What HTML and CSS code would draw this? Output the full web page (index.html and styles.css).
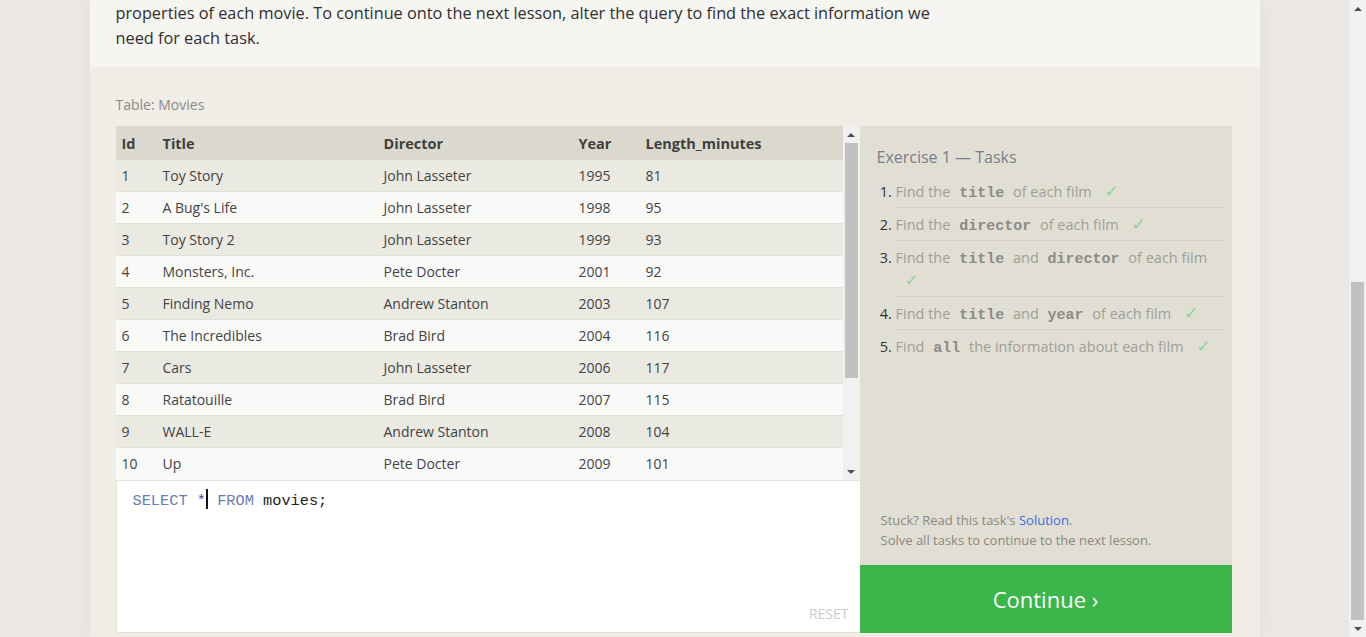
FILE: index.html
```html
<!DOCTYPE html>
<html lang="en">
<head>
<meta charset="utf-8">
<title>SQL Lesson 1: SELECT queries 101</title>
<link rel="stylesheet" href="styles.css">
</head>
<body>
<div class="viewport">
  <main class="card">
    <div class="lesson">
      <p class="last">properties of each movie. To continue onto the next lesson, alter the query to find the exact information we need for each task.</p>
    </div>

    <section class="exercise">
      <div class="table-label">Table: Movies</div>
      <div class="workspace">
        <div class="left">
          <div class="table-area">
            <div class="table-wrap">
              <table class="movies">
                <colgroup>
                  <col class="c-id"><col class="c-title"><col class="c-dir"><col class="c-year"><col class="c-len">
                </colgroup>
                <thead>
                  <tr><th>Id</th><th>Title</th><th>Director</th><th>Year</th><th>Length_minutes</th></tr>
                </thead>
                <tbody>
                  <tr><td>1</td><td>Toy Story</td><td>John Lasseter</td><td>1995</td><td>81</td></tr>
                  <tr><td>2</td><td>A Bug's Life</td><td>John Lasseter</td><td>1998</td><td>95</td></tr>
                  <tr><td>3</td><td>Toy Story 2</td><td>John Lasseter</td><td>1999</td><td>93</td></tr>
                  <tr><td>4</td><td>Monsters, Inc.</td><td>Pete Docter</td><td>2001</td><td>92</td></tr>
                  <tr><td>5</td><td>Finding Nemo</td><td>Andrew Stanton</td><td>2003</td><td>107</td></tr>
                  <tr><td>6</td><td>The Incredibles</td><td>Brad Bird</td><td>2004</td><td>116</td></tr>
                  <tr><td>7</td><td>Cars</td><td>John Lasseter</td><td>2006</td><td>117</td></tr>
                  <tr><td>8</td><td>Ratatouille</td><td>Brad Bird</td><td>2007</td><td>115</td></tr>
                  <tr><td>9</td><td>WALL-E</td><td>Andrew Stanton</td><td>2008</td><td>104</td></tr>
                  <tr><td>10</td><td>Up</td><td>Pete Docter</td><td>2009</td><td>101</td></tr>
                </tbody>
              </table>
            </div>
            <div class="vscroll">
              <div class="sb-btn"><span class="tri-up"></span></div>
              <div class="sb-track sb-track-table"><div class="sb-thumb thumb-table"></div></div>
              <div class="sb-btn"><span class="tri-down"></span></div>
            </div>
          </div>
          <div class="editor">
            <div class="code"><span class="kw">SELECT</span> <span class="op">*</span><span class="caret"></span> <span class="kw">FROM</span> <span class="id">movies;</span></div>
            <div class="reset">RESET</div>
          </div>
        </div>
        <div class="right">
          <div class="tasks">
            <h3 class="tasks-title">Exercise 1 — Tasks</h3>
            <ol class="task-list">
              <li>Find the <code>title</code> of each film <span class="check">✓</span></li>
              <li>Find the <code>director</code> of each film <span class="check">✓</span></li>
              <li>Find the <code>title</code> and <code>director</code> of each film <span class="check">✓</span></li>
              <li>Find the <code>title</code> and <code>year</code> of each film <span class="check">✓</span></li>
              <li>Find <code>all</code> the information about each film <span class="check">✓</span></li>
            </ol>
          </div>
          <div class="stuck">
            <div>Stuck? Read this task's <a class="link" href="#">Solution</a>.</div>
            <div>Solve all tasks to continue to the next lesson.</div>
          </div>
          <div class="continue">Continue ›</div>
        </div>
      </div>
    </section>
  </main>
</div>
<div class="vscroll page-scroll">
  <div class="sb-btn"><span class="tri-up"></span></div>
  <div class="sb-track sb-track-page"><div class="sb-thumb thumb-page"></div></div>
  <div class="sb-btn"><span class="tri-down"></span></div>
</div>
</body>
</html>
```

FILE: styles.css
```css
html {
  background: #ebe7e4;
}

body {
  margin: 0;
  height: 637px;
  overflow: hidden;
  display: flex;
  font-family: "Open Sans", "Noto Sans", sans-serif;
  color: #333;
}

.viewport {
  flex: 1;
  display: flex;
  justify-content: center;
  align-items: flex-start;
  overflow: hidden;
  background: #ebe7e4;
}

/* fake scrollbars */
.vscroll {
  width: 17px;
  flex: none;
  display: flex;
  flex-direction: column;
  background: #f1f1f1;
}

.sb-btn {
  height: 17px;
  flex: none;
  display: flex;
  align-items: center;
  justify-content: center;
}

.tri-up {
  width: 0;
  height: 0;
  border-left: 4px solid transparent;
  border-right: 4px solid transparent;
  border-bottom: 4px solid #505050;
}

.tri-down {
  width: 0;
  height: 0;
  border-left: 4px solid transparent;
  border-right: 4px solid transparent;
  border-top: 4px solid #505050;
}

.sb-track {
  flex: 1;
  display: flex;
  flex-direction: column;
}

.sb-thumb {
  margin: 0 2px;
  background: #c1c1c1;
}

.thumb-table {
  height: 235px;
}

.sb-track-page {
  padding-top: 265px;
}

.thumb-page {
  flex: 1;
}

.card {
  width: 1170px;
  flex: none;
  background: #f6f5f1;
  box-shadow: 0 0 16px rgba(0, 0, 0, 0.045);
}

.lesson {
  padding: 1px 26px 16px;
  font-size: 16.3px;
  line-height: 25px;
  color: #2f2f2f;
}

.lesson p {
  margin: 0;
  width: 840px;
}

.exercise {
  background: #efede6;
  padding: 28px 28px 4px 26px;
}

.table-label {
  font-size: 14px;
  line-height: 20px;
  color: #8a8a8a;
  margin-bottom: 11px;
}

.workspace {
  display: flex;
}

.left {
  width: 744px;
  display: flex;
  flex-direction: column;
}

.table-area {
  height: 354px;
  display: flex;
}

.table-wrap {
  flex: 1;
  overflow: hidden;
  background: #f9f9f8;
}

.movies {
  width: 100%;
  border-collapse: collapse;
  table-layout: fixed;
  font-size: 14px;
  color: #444;
}

.c-id { width: 41px; }
.c-title { width: 221px; }
.c-dir { width: 195px; }
.c-year { width: 67px; }

.movies th {
  background: #dbd9ce;
  height: 34px;
  padding: 0 0 0 6px;
  text-align: left;
  font-size: 14.5px;
  font-weight: 700;
  color: #3f3f3f;
}

.movies td {
  height: 31px;
  padding: 0 0 0 6px;
  border-bottom: 1px solid #e2e0d9;
  white-space: nowrap;
}

.movies tbody tr:nth-child(odd) td {
  background: #eae9e2;
}

.movies tbody tr:nth-child(even) td {
  background: #f9f9f8;
}

.movies tbody tr:last-child td {
  border-bottom: none;
}

.editor {
  height: 153px;
  box-sizing: border-box;
  background: #fff;
  border-left: 1px solid #e4e1d9;
  border-bottom: 1px solid #e4e1d9;
  border-top: 1px solid #e6e4dd;
  display: flex;
  flex-direction: column;
}

.code {
  flex: 1;
  padding: 8px 0 0 16px;
  font-family: "Liberation Mono", "DejaVu Sans Mono", monospace;
  font-size: 15.3px;
  line-height: 20px;
  color: #222;
}

.kw {
  color: #6b7bb4;
}

.op {
  color: #3d4f8a;
}

.caret {
  display: inline-block;
  width: 0;
  height: 20px;
  border-left: 2px solid #111;
  vertical-align: -4px;
}

.reset {
  align-self: flex-end;
  padding: 0 11px 8px 0;
  font-size: 14px;
  line-height: 20px;
  color: #cccccc;
}

.right {
  width: 372px;
  background: #e1dfd4;
  display: flex;
  flex-direction: column;
}

.tasks {
  padding: 20px 8px 0 17px;
}

.tasks-title {
  margin: 0 0 7px;
  font-size: 16px;
  line-height: 22px;
  font-weight: 400;
  color: #777d8e;
}

.task-list {
  margin: 0;
  padding: 0 0 0 19px;
  font-size: 14.5px;
  line-height: 23px;
  color: #a09e98;
}

.task-list li {
  padding: 5px 0 4px;
  border-bottom: 1px solid #d6d4c9;
}

.task-list li:last-child {
  border-bottom: none;
}

.task-list li::marker {
  color: #333;
}

.task-list code {
  font-family: "Liberation Mono", "DejaVu Sans Mono", monospace;
  font-weight: 700;
  font-size: 15px;
  line-height: 1;
  color: #8d8b86;
  padding: 0 5px;
}

.check {
  display: inline-block;
  margin-left: 9px;
  color: #8dd39a;
  font-family: "DejaVu Sans", sans-serif;
  font-size: 17px;
  line-height: 1;
}

.stuck {
  margin-top: auto;
  padding: 0 10px 15px 21px;
  font-size: 13px;
  line-height: 20px;
  color: #8b8780;
}

.link {
  color: #3b6ee6;
  text-decoration: none;
}

.continue {
  height: 68px;
  background: #3ab54a;
  color: #fff;
  font-size: 22px;
  display: flex;
  align-items: center;
  justify-content: center;
}
```
